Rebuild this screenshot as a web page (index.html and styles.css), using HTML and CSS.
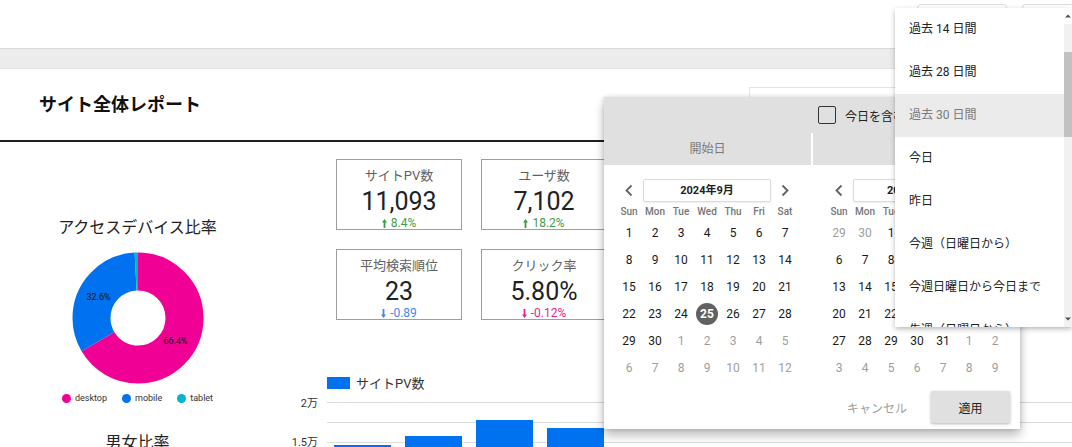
FILE: index.html
```html
<!DOCTYPE html>
<html lang="ja">
<head>
<meta charset="utf-8">
<title>サイト全体レポート</title>
<link rel="stylesheet" href="styles.css">
</head>
<body>
<header class="topbar">
  <div class="top-btn top-btn-wide"></div>
  <div class="top-btn top-btn-narrow"></div>
</header>
<div class="band"></div>
<main class="report">
  <div class="report-head">
    <h1 class="report-title">サイト全体レポート</h1>
    <div class="range-box"></div>
  </div>
  <div class="report-body">
    <section class="device-col">
      <h2 class="chart-title">アクセスデバイス比率</h2>
      <svg class="donut" width="150" height="140" viewBox="0 0 150 140">
        <g transform="rotate(-90 75 70)">
          <circle cx="75" cy="70" r="46.5" fill="none" stroke="#f10096" stroke-width="38" stroke-dasharray="194.0 300"/>
          <circle cx="75" cy="70" r="46.5" fill="none" stroke="#0072f0" stroke-width="38" stroke-dasharray="95.25 300" stroke-dashoffset="-194.0"/>
          <circle cx="75" cy="70" r="46.5" fill="none" stroke="#00b6cb" stroke-width="38" stroke-dasharray="2.92 300" stroke-dashoffset="-289.25"/>
        </g>
        <text class="slice-label" x="112.5" y="96" text-anchor="middle">66.4%</text>
        <text class="slice-label" x="35.5" y="52" text-anchor="middle">32.6%</text>
      </svg>
      <ul class="legend">
        <li class="legend-item"><span class="dot dot-desktop"></span>desktop</li>
        <li class="legend-item"><span class="dot dot-mobile"></span>mobile</li>
        <li class="legend-item"><span class="dot dot-tablet"></span>tablet</li>
      </ul>
      <h2 class="chart-title gender-title">男女比率</h2>
    </section>
    <section class="main-col">
      <div class="scorecards">
        <div class="score">
          <div class="score-label">サイトPV数</div>
          <div class="score-value">11,093</div>
          <div class="score-delta up"><svg class="arr" width="5" height="9" viewBox="0 0 5 9"><path d="M2.5 0L5 3.6H3.4V9H1.6V3.6H0Z" fill="currentColor"/></svg>8.4%</div>
        </div>
        <div class="score">
          <div class="score-label">ユーザ数</div>
          <div class="score-value">7,102</div>
          <div class="score-delta up"><svg class="arr" width="5" height="9" viewBox="0 0 5 9"><path d="M2.5 0L5 3.6H3.4V9H1.6V3.6H0Z" fill="currentColor"/></svg>18.2%</div>
        </div>
        <div class="score">
          <div class="score-label">平均検索順位</div>
          <div class="score-value">23</div>
          <div class="score-delta down-blue"><svg class="arr" width="5" height="9" viewBox="0 0 5 9"><path d="M2.5 9L5 5.4H3.4V0H1.6V5.4H0Z" fill="currentColor"/></svg>-0.89</div>
        </div>
        <div class="score">
          <div class="score-label">クリック率</div>
          <div class="score-value">5.80%</div>
          <div class="score-delta down-pink"><svg class="arr" width="5" height="9" viewBox="0 0 5 9"><path d="M2.5 9L5 5.4H3.4V0H1.6V5.4H0Z" fill="currentColor"/></svg>-0.12%</div>
        </div>
      </div>
      <div class="bar-chart">
        <div class="bar-legend"><span class="swatch"></span>サイトPV数</div>
        <div class="plot-wrap">
          <div class="y-axis"><span class="y-label">2万</span><span class="y-label y-label-2">1.5万</span></div>
          <div class="plot">
            <div class="bar" style="height:67px"></div>
            <div class="bar" style="height:76px"></div>
            <div class="bar" style="height:92px"></div>
            <div class="bar" style="height:84px"></div>
          </div>
        </div>
      </div>
    </section>
  </div>
</main>

<div class="datepicker">
  <div class="dp-head">
    <div class="dp-today"><span class="checkbox"></span>今日を含む</div>
    <div class="dp-tabs"><div class="dp-tab">開始日</div><div class="dp-tab">終了日</div></div>
  </div>
  <div class="dp-months">
    <div class="cal">
      <div class="cal-nav">
        <svg class="chev" width="26" height="23" viewBox="0 0 26 23"><polyline points="15.5,6.5 10.5,11.5 15.5,16.5" fill="none" stroke="#5f6368" stroke-width="1.8"/></svg>
        <div class="cal-month">2024年9月</div>
        <svg class="chev" width="26" height="23" viewBox="0 0 26 23"><polyline points="10.5,6.5 15.5,11.5 10.5,16.5" fill="none" stroke="#5f6368" stroke-width="1.8"/></svg>
      </div>
      <div class="cal-grid">
        <span class="dow">Sun</span><span class="dow">Mon</span><span class="dow">Tue</span><span class="dow">Wed</span><span class="dow">Thu</span><span class="dow">Fri</span><span class="dow">Sat</span>
        <span class="d">1</span><span class="d">2</span><span class="d">3</span><span class="d">4</span><span class="d">5</span><span class="d">6</span><span class="d">7</span>
        <span class="d">8</span><span class="d">9</span><span class="d">10</span><span class="d">11</span><span class="d">12</span><span class="d">13</span><span class="d">14</span>
        <span class="d">15</span><span class="d">16</span><span class="d">17</span><span class="d">18</span><span class="d">19</span><span class="d">20</span><span class="d">21</span>
        <span class="d">22</span><span class="d">23</span><span class="d">24</span><span class="d sel"><span class="sel-dot">25</span></span><span class="d">26</span><span class="d">27</span><span class="d">28</span>
        <span class="d">29</span><span class="d">30</span><span class="d muted">1</span><span class="d muted">2</span><span class="d muted">3</span><span class="d muted">4</span><span class="d muted">5</span>
        <span class="d muted">6</span><span class="d muted">7</span><span class="d muted">8</span><span class="d muted">9</span><span class="d muted">10</span><span class="d muted">11</span><span class="d muted">12</span>
      </div>
    </div>
    <div class="cal">
      <div class="cal-nav">
        <svg class="chev" width="26" height="23" viewBox="0 0 26 23"><polyline points="15.5,6.5 10.5,11.5 15.5,16.5" fill="none" stroke="#5f6368" stroke-width="1.8"/></svg>
        <div class="cal-month">2024年10月</div>
        <svg class="chev" width="26" height="23" viewBox="0 0 26 23"><polyline points="10.5,6.5 15.5,11.5 10.5,16.5" fill="none" stroke="#5f6368" stroke-width="1.8"/></svg>
      </div>
      <div class="cal-grid">
        <span class="dow">Sun</span><span class="dow">Mon</span><span class="dow">Tue</span><span class="dow">Wed</span><span class="dow">Thu</span><span class="dow">Fri</span><span class="dow">Sat</span>
        <span class="d muted">29</span><span class="d muted">30</span><span class="d">1</span><span class="d">2</span><span class="d">3</span><span class="d">4</span><span class="d">5</span>
        <span class="d">6</span><span class="d">7</span><span class="d">8</span><span class="d">9</span><span class="d">10</span><span class="d">11</span><span class="d">12</span>
        <span class="d">13</span><span class="d">14</span><span class="d">15</span><span class="d">16</span><span class="d">17</span><span class="d">18</span><span class="d">19</span>
        <span class="d">20</span><span class="d">21</span><span class="d">22</span><span class="d">23</span><span class="d">24</span><span class="d">25</span><span class="d">26</span>
        <span class="d">27</span><span class="d">28</span><span class="d">29</span><span class="d">30</span><span class="d">31</span><span class="d muted">1</span><span class="d muted">2</span>
        <span class="d muted">3</span><span class="d muted">4</span><span class="d muted">5</span><span class="d muted">6</span><span class="d muted">7</span><span class="d muted">8</span><span class="d muted">9</span>
      </div>
    </div>
  </div>
  <div class="dp-actions">
    <button class="btn btn-cancel">キャンセル</button>
    <button class="btn btn-apply">適用</button>
  </div>
</div>

<div class="menu">
  <ul class="menu-list">
    <li class="menu-item">過去 14 日間</li>
    <li class="menu-item">過去 28 日間</li>
    <li class="menu-item active">過去 30 日間</li>
    <li class="menu-item">今日</li>
    <li class="menu-item">昨日</li>
    <li class="menu-item">今週（日曜日から）</li>
    <li class="menu-item">今週日曜日から今日まで</li>
    <li class="menu-item">先週（日曜日から）</li>
  </ul>
  <div class="scrollbar">
    <div class="sb-arrow sb-arrow-up"><svg width="8" height="6" viewBox="0 0 8 6"><path d="M4 1.5L7 4.5H1Z" fill="#505050"/></svg></div>
    <div class="sb-thumb"></div>
    <div class="sb-fill"></div>
    <div class="sb-arrow"><svg width="8" height="6" viewBox="0 0 8 6"><path d="M4 4.5L7 1.5H1Z" fill="#505050"/></svg></div>
  </div>
</div>
</body>
</html>
```

FILE: styles.css
```css
html, body {
  margin: 0;
  padding: 0;
  overflow: hidden;
}
body {
  width: 1072px;
  height: 447px;
  position: relative;
  background: #fff;
  font-family: Roboto, "Noto Sans CJK JP", sans-serif;
  color: #212121;
}

/* top bar */
.topbar {
  height: 48px;
  box-sizing: border-box;
  padding-top: 4px;
  display: flex;
  justify-content: flex-end;
  gap: 15px;
}
.top-btn {
  height: 32px;
  box-sizing: border-box;
  border: 1px solid #dadce0;
  border-radius: 4px;
}
.top-btn-wide { width: 90px; }
.top-btn-narrow { width: 50px; border-right: none; border-radius: 4px 0 0 4px; }

.band {
  height: 19px;
  background: #ececec;
  border-top: 1px solid #d8d8d8;
  border-bottom: 1px solid #e3e3e3;
}

/* report header */
.report-head {
  height: 71px;
  display: flex;
  align-items: center;
  padding-left: 39px;
  border-bottom: 2px solid #1e1e1e;
}
.report-title {
  margin: 0;
  font-size: 18px;
  font-weight: 700;
  line-height: 1;
  color: #111;
}
.range-box {
  align-self: flex-start;
  margin: 18px 143px 0 auto;
  width: 180px;
  height: 40px;
  box-sizing: border-box;
  border: 1px solid #e4e4e4;
}

.report-body {
  display: flex;
}

/* device column */
.device-col {
  width: 275px;
  flex-shrink: 0;
  text-align: center;
}
.chart-title {
  margin: 75px 0 0;
  font-size: 16px;
  font-weight: 400;
  line-height: 22px;
  color: #212121;
}
.donut {
  display: block;
  margin: 9px auto 0;
}
.slice-label {
  font-family: Roboto, sans-serif;
  font-size: 9px;
  fill: #111;
}
.legend {
  list-style: none;
  margin: 3px 0 0;
  padding: 0;
  display: flex;
  justify-content: center;
  gap: 15px;
  font-size: 9px;
  line-height: 14px;
  color: #333;
}
.legend-item {
  display: flex;
  align-items: center;
  gap: 4px;
}
.dot {
  width: 9px;
  height: 9px;
  border-radius: 50%;
}
.dot-desktop { background: #f10096; }
.dot-mobile { background: #0072f0; }
.dot-tablet { background: #00b6cb; }
.gender-title { margin-top: 27px; }

/* main column */
.main-col {
  flex: 1;
  padding-top: 17px;
}
.scorecards {
  margin-left: 61px;
  display: grid;
  grid-template-columns: repeat(2, 126px);
  grid-auto-rows: 71px;
  gap: 19px;
}
.score {
  box-sizing: border-box;
  border: 1px solid #9e9e9e;
  padding-top: 7px;
  text-align: center;
}
.score-label {
  font-size: 13px;
  line-height: 18px;
  color: #5f5f5f;
}
.score-value {
  margin-top: 2px;
  font-size: 25px;
  line-height: 30px;
  color: #202124;
}
.score-delta {
  font-size: 12px;
  line-height: 13px;
  display: flex;
  align-items: center;
  justify-content: center;
  gap: 4px;
}
.arr { display: block; }
.up { color: #3d9c47; }
.down-blue { color: #3f86f2; }
.down-pink { color: #e8238f; }

/* bar chart */
.bar-chart {
  margin-top: 56px;
}
.bar-legend {
  margin-left: 52px;
  display: flex;
  align-items: center;
  height: 13px;
  font-size: 13px;
  color: #333;
}
.swatch {
  width: 23px;
  height: 12px;
  background: #0072f0;
  margin-right: 6px;
}
.plot-wrap {
  margin-top: 13px;
  display: flex;
}
.y-axis {
  width: 43px;
  margin-right: 9px;
  margin-top: -5px;
  display: flex;
  flex-direction: column;
  align-items: flex-end;
  font-size: 11px;
  line-height: 14px;
  color: #333;
}
.y-label-2 { margin-top: 25px; }
.plot {
  flex: 1;
  height: 110px;
  padding-left: 7px;
  display: flex;
  align-items: flex-end;
  gap: 14px;
  background: repeating-linear-gradient(to bottom, #dcdcdc 0, #dcdcdc 1px, transparent 1px, transparent 20px);
}
.bar {
  width: 57px;
  background: #0072f0;
}

/* date picker popup */
.datepicker {
  position: absolute;
  left: 604px;
  top: 97px;
  width: 416px;
  height: 332px;
  background: #fff;
  box-shadow: 0 6px 10px rgba(0, 0, 0, 0.28), 0 0 4px rgba(0, 0, 0, 0.14);
}
.dp-head {
  background: #e0e0e0;
}
.dp-today {
  height: 36px;
  display: flex;
  align-items: center;
  padding-left: 214px;
  font-size: 12px;
  color: #212121;
}
.checkbox {
  width: 18px;
  height: 18px;
  box-sizing: border-box;
  border: 1.5px solid #333;
  border-radius: 2px;
  margin-right: 9px;
}
.dp-tabs {
  display: flex;
  gap: 2px;
  height: 32px;
  background: #fff;
}
.dp-tab {
  flex: 1;
  background: #e0e0e0;
  text-align: center;
  line-height: 32px;
  font-size: 12px;
  color: #7a7a7a;
}
.dp-months {
  display: flex;
  gap: 28px;
  padding: 14px 12px 0;
}
.cal { width: 182px; }
.cal-nav {
  display: grid;
  grid-template-columns: 26px 1fr 26px;
  height: 23px;
  align-items: center;
}
.chev { display: block; }
.cal-month {
  height: 23px;
  margin: 0 1px;
  box-sizing: border-box;
  border: 1px solid #dcdcdc;
  border-radius: 2px;
  box-shadow: 0 1px 2px rgba(0, 0, 0, 0.08);
  text-align: center;
  line-height: 21px;
  font-size: 11px;
  font-weight: 700;
  color: #202124;
}
.cal-grid {
  margin-top: 1px;
  display: grid;
  grid-template-columns: repeat(7, 26px);
  grid-template-rows: 16px;
  grid-auto-rows: 27px;
}
.dow {
  display: flex;
  align-items: center;
  justify-content: center;
  font-size: 10px;
  font-weight: 500;
  color: #757575;
}
.d {
  display: flex;
  align-items: center;
  justify-content: center;
  font-size: 12px;
  font-weight: 400;
  color: #1a1a1a;
}
.d.muted {
  color: #9e9e9e;
}
.sel-dot {
  width: 22px;
  height: 22px;
  border-radius: 50%;
  background: #616161;
  color: #fff;
  font-weight: 700;
  display: flex;
  align-items: center;
  justify-content: center;
}
.dp-actions {
  margin-top: 10px;
  padding-right: 10px;
  display: flex;
  justify-content: flex-end;
  gap: 14px;
}
.btn {
  font-family: inherit;
  font-size: 12px;
  height: 32px;
  border: none;
  background: none;
  padding: 0;
}
.btn-cancel {
  width: 80px;
  color: #9e9e9e;
}
.btn-apply {
  width: 79px;
  background: #e0e0e0;
  border-radius: 2px;
  box-shadow: 0 1px 3px rgba(0, 0, 0, 0.3);
  color: #212121;
}

/* dropdown menu */
.menu {
  position: absolute;
  left: 895px;
  top: 8px;
  width: 177px;
  height: 319px;
  background: #fff;
  box-shadow: 0 2px 5px rgba(0, 0, 0, 0.28);
  display: flex;
  overflow: hidden;
}
.menu-list {
  flex: 1;
  list-style: none;
  margin: 0;
  padding: 0;
}
.menu-item {
  height: 43px;
  line-height: 43px;
  padding-left: 14px;
  font-size: 12px;
  color: #202124;
  white-space: nowrap;
}
.menu-item.active {
  background: #ebebeb;
  color: #7a7a7a;
}
.scrollbar {
  width: 8px;
  background: #f1f1f1;
  display: flex;
  flex-direction: column;
}
.sb-arrow {
  height: 16px;
  display: flex;
  align-items: center;
  justify-content: center;
}
.sb-arrow-up { background: #fff; }
.sb-thumb {
  margin-top: 28px;
  height: 85px;
  background: #c1c1c1;
}
.sb-fill { flex: 1; }
```
